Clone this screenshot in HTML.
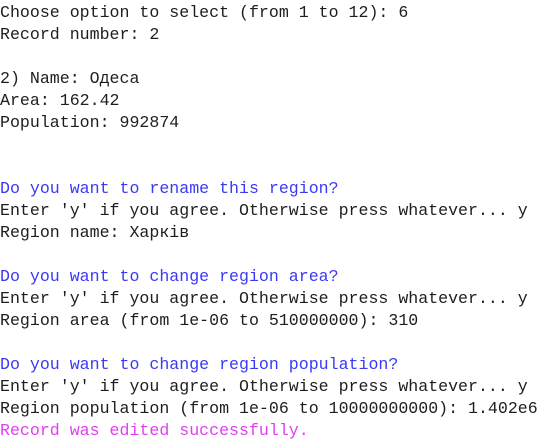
<!DOCTYPE html>
<html><head><meta charset="utf-8"><style>
html,body{margin:0;padding:0;background:#fff;width:543px;height:446px;overflow:hidden}
pre{margin:0;padding:2px 0 0 0;font-family:"Liberation Mono","DejaVu Sans Mono",monospace;font-size:16.6px;line-height:22px;color:#1e1e1e;white-space:pre}
.b{color:#3a3af5}.m{color:#e040f0}
</style></head><body><pre>Choose option to select (from 1 to 12): 6
Record number: 2

2) Name: Одеса
Area: 162.42
Population: 992874


<span class="b">Do you want to rename this region?</span>
Enter 'y' if you agree. Otherwise press whatever... y
Region name: Харків

<span class="b">Do you want to change region area?</span>
Enter 'y' if you agree. Otherwise press whatever... y
Region area (from 1e-06 to 510000000): 310

<span class="b">Do you want to change region population?</span>
Enter 'y' if you agree. Otherwise press whatever... y
Region population (from 1e-06 to 10000000000): 1.402e6
<span class="m">Record was edited successfully.</span></pre></body></html>
